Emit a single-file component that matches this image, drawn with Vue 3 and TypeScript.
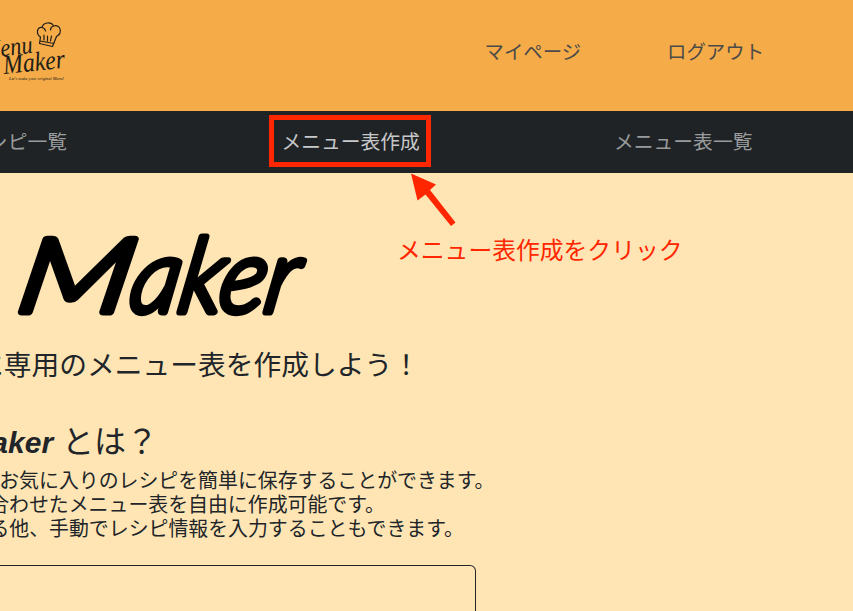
<script setup lang="ts">
const intro: string[] = [
  'お気に入りのレシピを簡単に保存することができます。',
  'に合わせたメニュー表を自由に作成可能です。',
  'る他、手動でレシピ情報を入力することもできます。',
]
</script>

<template>
  <div class="page">
    <header class="header">
      <svg class="brand" width="70" height="111" viewBox="0 0 70 111">
        <g class="script">
          <text x="-18" y="53" font-size="25" textLength="51" lengthAdjust="spacingAndGlyphs" transform="rotate(-7 30 50)">Menu</text>
          <text x="4" y="74" font-size="27" textLength="62" lengthAdjust="spacingAndGlyphs" transform="rotate(-6 5 73)">Maker</text>
          <text x="9" y="80" font-size="5" textLength="55" lengthAdjust="spacingAndGlyphs">Let's make your original Menu!</text>
        </g>
        <path class="hat" d="M40.5 37C36 34.5 36.5 26.5 42 27.5C43 22 51.5 21.5 53.5 26C60.500 24 63 33 56.500 36.500L52.500 46.500L39.500 43.500L40.500 37M40 41L54 43.500M44 35V40M47.500 36V41M51.500 36L50.500 41M42 27.500Q45 28 45.500 31M53.500 26Q50.500 27 50.500 30" />
      </svg>
      <nav class="account">
        <a>マイページ</a>
        <a>ログアウト</a>
      </nav>
    </header>

    <nav class="navbar">
      <div class="first"><a>レシピ一覧</a></div>
      <a class="selected">メニュー表作成</a>
      <a class="last">メニュー表一覧</a>
    </nav>

    <main class="main">
      <svg class="wordmark" width="320" height="110" viewBox="0 0 320 110">
        <text transform="translate(0 89) skewX(-10)" font-size="103"><tspan x="14" textLength="114" lengthAdjust="spacingAndGlyphs">M</tspan><tspan x="127" textLength="167" lengthAdjust="spacingAndGlyphs">aker</tspan></text>
      </svg>
      <div class="clip lead"><p>に専用のメニュー表を作成しよう！</p></div>
      <div class="clip about"><h2><em>Maker</em> とは？</h2></div>
      <div class="intro">
        <div v-for="(line, i) in intro" :key="line" class="clip" :class="`line-${i}`"><p>{{ line }}</p></div>
      </div>
      <section class="card"></section>
    </main>

    <aside class="callout">
      <svg width="60" height="60" viewBox="0 0 60 60">
        <path d="M1 1.5L26 12.5L20 18L45.500 50.500L41 54L15.500 22.500L7.500 28.500Z" />
      </svg>
      <span>メニュー表作成をクリック</span>
    </aside>
  </div>
</template>

<style>
body { margin: 0; overflow: hidden; }
</style>

<style scoped>
.page { position: relative; box-sizing: border-box; width: 853px; height: 611px; overflow: hidden; background: #ffe5b4; color: #212529; font-family: "Liberation Sans", "Noto Sans CJK JP", sans-serif; }
p, h2 { margin: 0; white-space: nowrap; flex: none; }
.header { display: flex; height: 111px; background: #f5ab48; }
.brand { display: block; flex: none; color: #211d18; }
.script { fill: currentColor; font-family: "Liberation Serif", cursive; font-style: italic; }
.hat { fill: none; stroke: currentColor; stroke-width: 1.2; stroke-linejoin: round; stroke-linecap: round; }
.account { display: flex; gap: 86px; padding: 37px 0 0 414.5px; font-size: 19.4px; line-height: 30px; color: #4b4a48; white-space: nowrap; }
.navbar { display: flex; align-items: center; height: 62px; background: #1f2326; color: #999b9c; font-size: 19.8px; white-space: nowrap; }
.navbar a { line-height: 30px; }
.first { display: flex; justify-content: flex-end; flex: none; width: 67px; }
.selected { box-sizing: border-box; width: 162px; height: 52px; margin: -2px 0 0 202.4px; padding: 7px 0 0 7px; border: 5px solid #ff2600; color: #c7c8c9; }
.last { margin-left: 182.6px; }
.main { display: flex; flex-direction: column; }
.wordmark { display: block; margin-top: 50px; fill: #000; stroke: #000; stroke-width: 7; stroke-linejoin: round; font-family: "Lato Light", Lato, sans-serif; font-style: italic; font-weight: 300; }
.clip { display: flex; justify-content: flex-end; }
.lead { width: 420px; margin-top: 12px; font-size: 27.75px; line-height: 42px; }
.about { width: 158px; margin-top: 33px; }
.about h2 { font-size: 32px; line-height: 44px; font-weight: 400; }
.about em { font-size: 30px; font-weight: 700; }
.intro { margin-top: 4px; font-size: 19.9px; line-height: 24px; }
.line-0 { width: 494.5px; }
.line-1 { width: 385px; }
.line-2 { width: 464px; }
.card { box-sizing: border-box; width: 476px; height: 80px; margin-top: 24px; border: 1px solid #212529; border-left: 0; border-radius: 0 6px 0 0; }
.callout { position: absolute; left: 397px; top: 172px; display: flex; flex-direction: column; color: #ff2600; font-size: 23.8px; line-height: 37px; white-space: nowrap; }
.callout svg { display: block; margin-left: 13px; fill: currentColor; }
</style>
